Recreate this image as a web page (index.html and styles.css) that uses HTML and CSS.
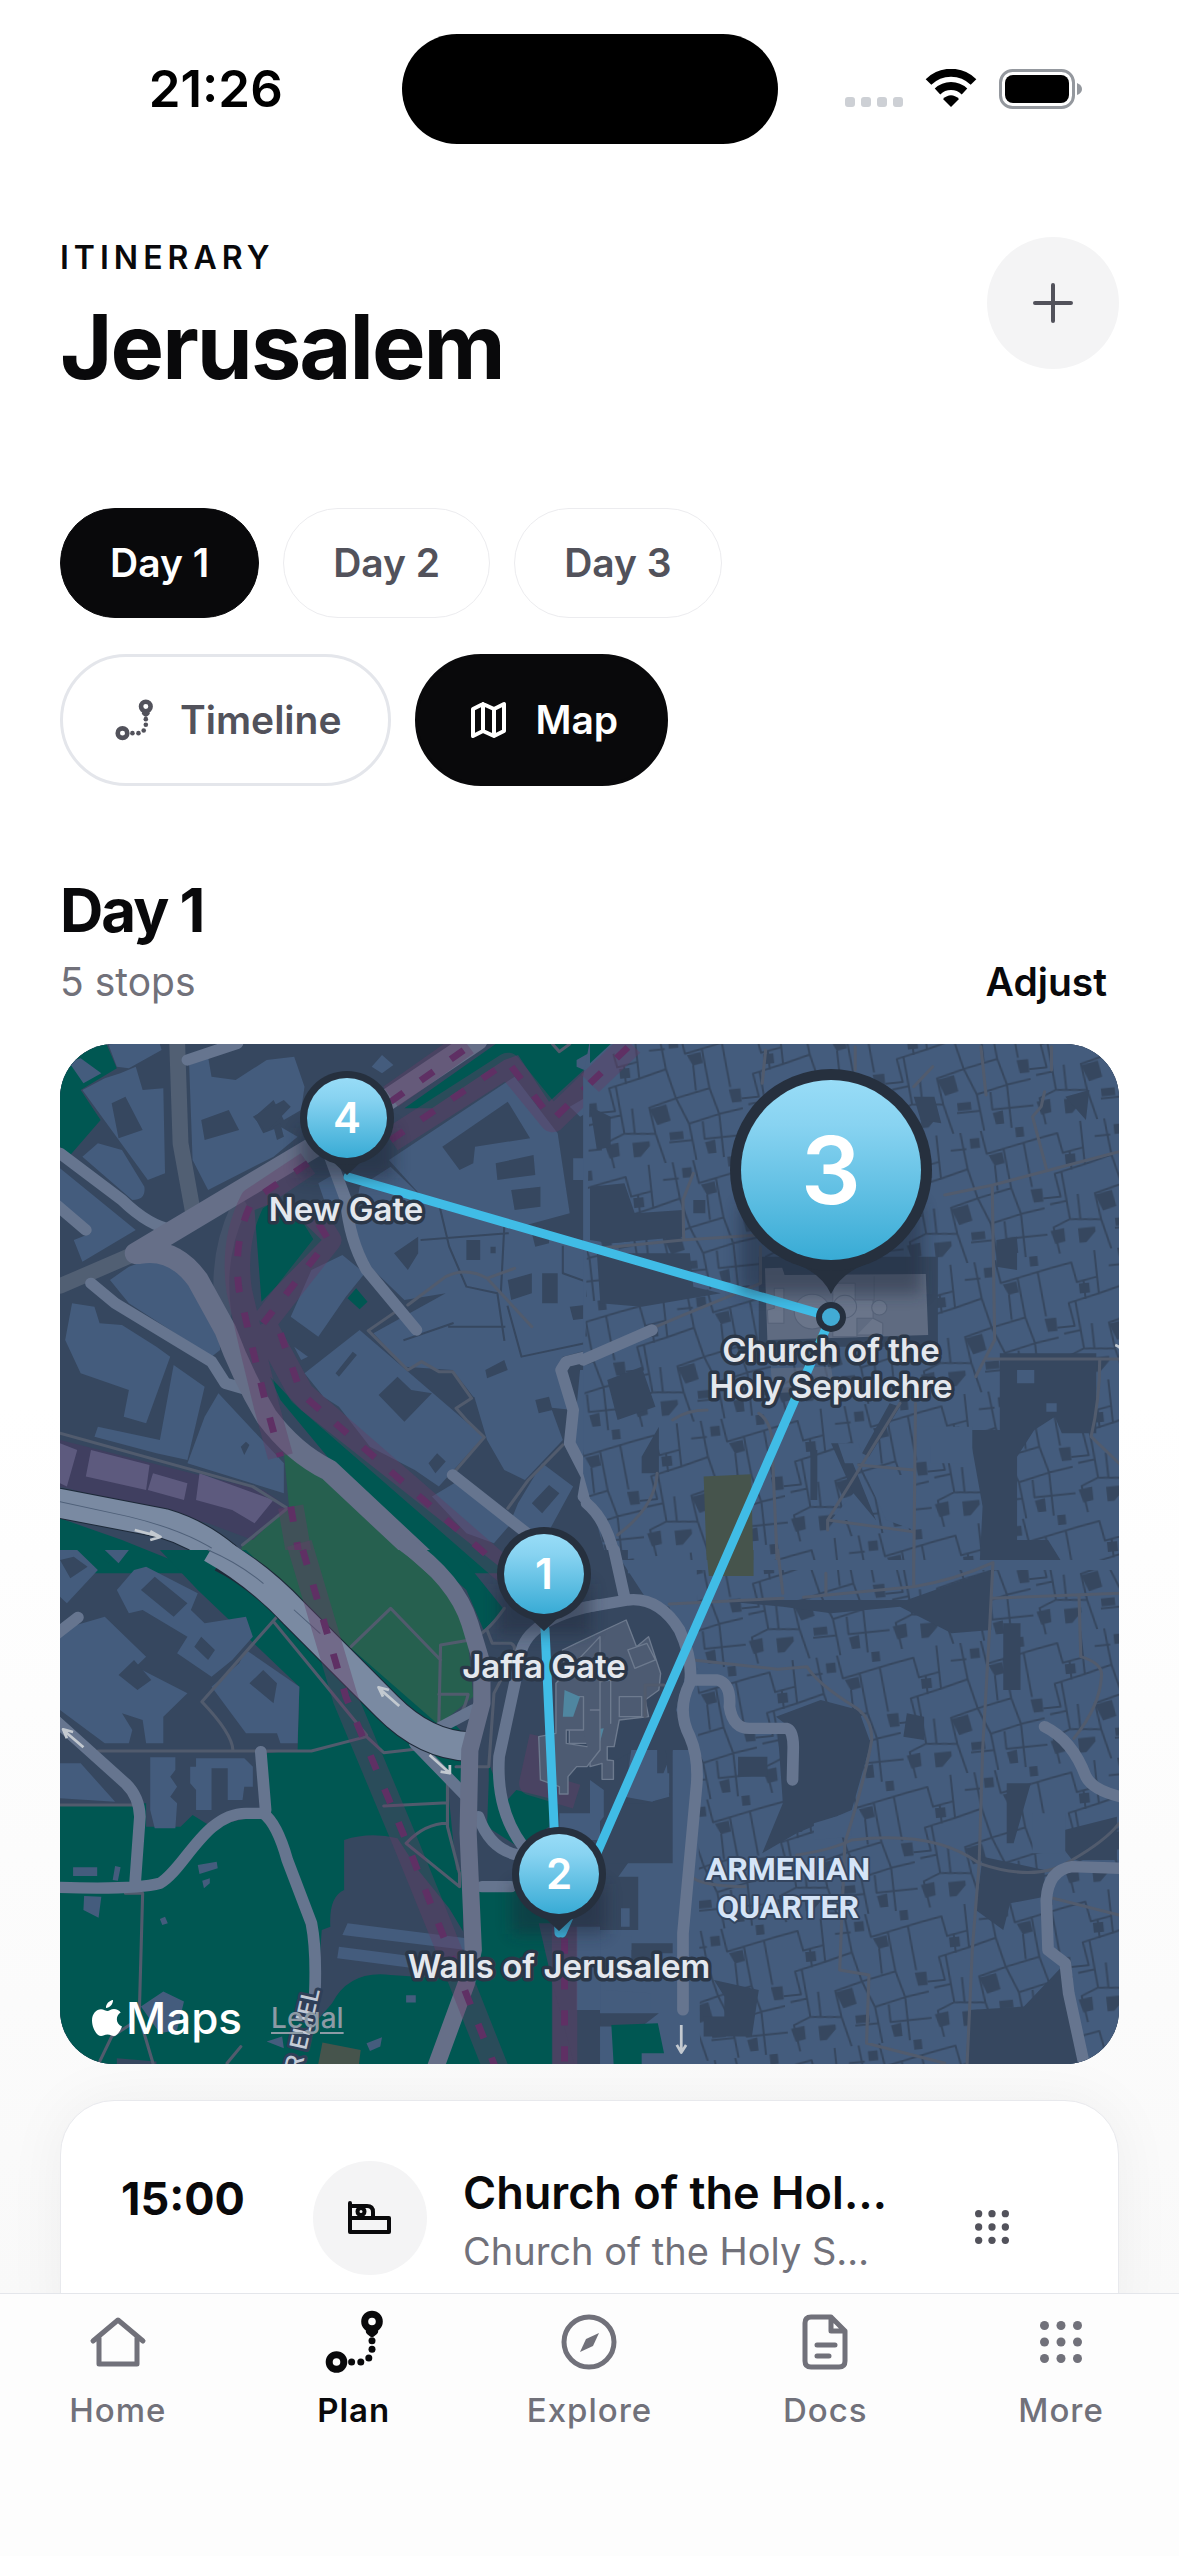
FILE: index.html
```html
<!DOCTYPE html>
<html lang="en">
<head>
<meta charset="utf-8">
<meta name="viewport" content="width=device-width, initial-scale=1">
<title>Itinerary – Jerusalem</title>
<link rel="stylesheet" href="styles.css">
</head>
<body>
<svg class="defs" aria-hidden="true">
  <symbol id="route" viewBox="0 0 64 64">
    <circle cx="14.500" cy="52" r="7.300"/>
    <circle cx="50" cy="11.500" r="7.300"/>
    <path d="M47.500 21.500L50 23.500 52.500 21.500"/>
    <g stroke="none" fill="currentColor"><circle cx="29.600" cy="52" r="3.500"/><circle cx="38.800" cy="52" r="3.500"/><circle cx="46.800" cy="48" r="3.500"/><circle cx="50" cy="39.300" r="3.500"/><circle cx="50" cy="30.700" r="3.500"/></g>
  </symbol>
  <symbol id="grid" viewBox="0 0 42 42">
    <g stroke="none" fill="currentColor"><circle cx="4.500" cy="4.500" r="4.500"/><circle cx="21" cy="4.500" r="4.500"/><circle cx="37.500" cy="4.500" r="4.500"/><circle cx="4.500" cy="21" r="4.500"/><circle cx="21" cy="21" r="4.500"/><circle cx="37.500" cy="21" r="4.500"/><circle cx="4.500" cy="37.500" r="4.500"/><circle cx="21" cy="37.500" r="4.500"/><circle cx="37.500" cy="37.500" r="4.500"/></g>
  </symbol>
</svg>

<div class="statusbar">
  <span class="clock">21:26</span>
  <span class="island"></span>
  <div class="indicators">
    <svg width="58" height="40" viewBox="0 0 58 40"><path fill="#cdd0d5" d="M3 28h4q3 0 3 3v4q0 3-3 3H3q-3 0-3-3v-4q0-3 3-3zM19 28h4q3 0 3 3v4q0 3-3 3h-4q-3 0-3-3v-4q0-3 3-3zM35 28h4q3 0 3 3v4q0 3-3 3h-4q-3 0-3-3v-4q0-3 3-3zM51 28h4q3 0 3 3v4q0 3-3 3h-4q-3 0-3-3v-4q0-3 3-3z"/></svg>
    <svg width="52" height="40" viewBox="0 0 52 40"><g stroke="#000" stroke-width="8"><path d="M3.500 13a32 32 0 0 1 45 0"/><path d="M12.500 22.500a19.500 19.500 0 0 1 27 0"/></g><path fill="#000" d="M26 38l-8-8q8-7.500 16 0z"/></svg>
    <svg width="83" height="40" viewBox="0 0 83 40"><rect x="1.500" y="1.500" width="73" height="37" rx="12" stroke="#94989e" stroke-width="3"/><rect x="6" y="6" width="64" height="28" rx="8" fill="#000"/><path d="M78 14q5 2 5 6t-5 6z" fill="#94989e"/></svg>
  </div>
</div>

<main class="page">
  <header class="top">
    <div>
      <p class="eyebrow">ITINERARY</p>
      <h1>Jerusalem</h1>
    </div>
    <button class="add" aria-label="Add"><svg width="40" height="40" viewBox="0 0 40 40"><path d="M20 2v36M2 20h36"/></svg></button>
  </header>

  <div class="pills days">
    <button class="pill active">Day 1</button>
    <button class="pill">Day 2</button>
    <button class="pill">Day 3</button>
  </div>
  <div class="pills modes">
    <button class="mode"><svg class="route" width="42" height="42"><use href="#route"/></svg>Timeline</button>
    <button class="mode active"><svg width="42" height="42" viewBox="0 0 42 42"><path d="M5 10l10-5 11 5 10-5v27l-10 5-11-5-10 5zM15 5v27M26 10v27"/></svg>Map</button>
  </div>

  <div class="dayhead">
    <div>
      <h2>Day 1</h2>
      <p class="muted">5 stops</p>
    </div>
    <button class="adjust">Adjust</button>
  </div>

  <section class="map" aria-label="Map of Day 1">
    <svg viewBox="0 0 1059 1020">
      <defs>
        <linearGradient id="ball" x1="0" y1="0" x2="0" y2="1"><stop offset="0" stop-color="#98dcf7"/><stop offset=".25" stop-color="#88d3f1"/><stop offset="1" stop-color="#38abd5"/></linearGradient>
        <filter id="soft" x="-30%" y="-30%" width="160%" height="160%"><feGaussianBlur stdDeviation="8"/></filter>
        <pattern id="lanes" width="420" height="390" patternUnits="userSpaceOnUse" patternTransform="rotate(-6)">
          <path class="lane" d="M0 40L60 30 70 90 130 80M130 0V130L40 150 50 220H0M60 150L70 290 20 310 30 390M130 130L210 110 200 0M210 110L230 200 150 220 160 300 70 290M230 200L330 180 320 60 270 70 260 0M320 60L420 40M330 180L350 260 420 250M350 260L260 280 270 390M160 300L180 390M260 280L230 200M380 50L390 180M350 330H420M350 260V390M90 90V140M100 220V290M170 50H210M290 110V180M300 280V330H350M20 240L60 235M200 330H260"/>
          <path class="ground" d="M75 95h30v30h-30zM150 225l50-10 8 50-40 10zM275 75l40-6 4 34-30 5zM385 190h34v40h-28zM200 300h40v24h-40zM10 320l40-5v40l-30 5zM360 0h24v30h-24zM300 340l30-5v40h-24zM90 320h50v14l-30 30h-20zM225 20h28v30h-28z"/>
        </pattern>
      </defs>
      <rect class="ground" width="1059" height="1020"/>

      <!-- north-west: New Gate -->
      <g transform="translate(0 -4) scale(.3444 .3333)">
        <path class="green" d="M0 12H135L165 85 60 150 118 240 30 345 0 320ZM1000 205H1080L1290 60 1330 45 1420 185 1568 45V12H1265ZM565 510L640 480 760 600 585 785ZM610 1010L700 1110 1300 1600H1080L800 1280 640 1080ZM0 1435L180 1500 420 1600H0ZM835 775L860 745 893 785 870 808Z"/>
        <path class="park" d="M650 1240L760 1300 1080 1580H510L530 1515 665 1400Z"/>
        <path class="bld" d="M140 12H290L295 30 200 85 165 80ZM25 65L60 55 120 100 68 130ZM65 150L130 115 175 100 220 80 240 150 300 145 305 400 255 420ZM110 310L180 330 245 440Q250 480 210 480L65 350ZM0 385L220 570 65 665 40 600 90 580 0 500ZM375 75L430 50 440 110 510 120 600 60 680 50 710 140 700 210 650 240 620 180 565 230 590 280 640 260 690 290 620 350 430 450 385 360ZM145 720L200 680Q300 640 340 690L460 850 465 930 440 950 200 790ZM35 790L100 800 115 850 180 855 280 920 320 950 250 1150 185 1130 200 1050 60 1000 15 900ZM330 975L420 1040 370 1260 280 1240 100 1190 110 1160 290 1200ZM460 1060L650 1270V1360L370 1270 420 1130ZM905 80L935 45 968 75 935 100ZM450 185L500 160 490 130 530 115 540 160 470 200ZM955 360L1320 110 1445 280 1480 520 1300 570 1060 480ZM750 430L800 400 830 490 780 520ZM870 440L960 380 1060 480 1300 560 1568 640V920L1460 950 1440 990 1490 1110 1300 1090 1200 1070 1140 990 1000 980 910 880 1120 760 1000 780 900 680 850 560ZM820 645L885 700 830 770 750 890 670 830 730 690ZM680 920L720 950 700 960ZM710 1000L870 870 1230 1190 1100 1340 1030 1290 900 1220 810 1100 765 1070ZM1200 1060L1400 1030 1460 1200 1350 1320 1290 1290 1240 1200ZM1080 1370L1160 1320 1310 1450 1260 1510 1180 1480ZM1330 1390L1400 1270 1490 1340 1400 1510 1310 1440ZM1510 990H1568V1400L1540 1310 1490 1210 1500 1100ZM1490 355H1550V420H1490ZM1500 60L1568 20V110L1500 80ZM1480 200L1530 170 1560 200 1510 230Z"/>
        <path class="ground" d="M410 240L490 210 520 270 420 300ZM560 230L650 180 670 200 600 275ZM620 260L640 250 650 290 630 300ZM1110 320L1300 185 1365 295 1205 320 1200 370 1160 390ZM1265 370L1375 345 1380 405 1270 420ZM1310 450L1395 440 1395 500 1320 510ZM970 640L1040 590V640L1010 690ZM1180 600h40v60h-40ZM1300 720L1370 700V760L1310 780ZM1400 700h45v90h-45ZM1235 990L1290 960 1300 990 1240 1015ZM925 1065L980 1010 1020 1050 1080 1060 1000 1145ZM1070 1270L1095 1240 1120 1265 1090 1300ZM1370 1390L1420 1335 1450 1360 1400 1420ZM150 190L190 170 240 270 170 295ZM1480 800L1568 790V830L1490 840ZM1250 620h15v20h-15ZM1370 580L1420 560V610L1380 620ZM1380 1080L1420 1070 1430 1110 1390 1120ZM800 1000L850 935 862 945 810 1010ZM525 1220L540 1205 550 1215 535 1245Z"/>
        <path class="lane" d="M1100 490L1130 620 1180 740 1270 760 1290 900M1290 560L1280 760M1460 620V700L1568 740M1050 600L1300 580M1300 800L1340 950 1568 900M1130 860H1290M1000 900L1140 850"/>
        <path class="plum" d="M0 1200L420 1310 590 1350 660 1400 560 1500 430 1450 0 1340Z"/>
        <path class="plumbld" d="M90 1230L260 1275 250 1350 75 1310ZM270 1300L370 1330 360 1380 255 1350ZM405 1300L620 1380 565 1450 500 1410 395 1380ZM0 1210L50 1230 20 1340 0 1330Z"/>
        <path class="path" d="M1010 795L1120 710Q1180 680 1240 715L1370 860M1240 715L1320 685M975 815L895 872 1010 990 1050 965 1100 995H1140L1195 1075 1150 1105 1180 1140 1232 1192 1150 1290M1460 1215L1360 1320 1300 1405M0 1180L560 1340 660 1405 530 1515M1430 12L1450 35 1480 12"/>
        <path class="road dim" d="M340 0L350 310 385 510M0 738L220 640"/>
        <path class="road dimmer" d="M520 500Q450 650 475 820"/>
        <path class="road" d="M0 340L180 480Q260 560 330 570M90 730L160 790 440 965 480 1030 530 1045M-10 495L75 570M780 340L830 480Q840 600 890 690L1035 870M370 60L515 10M1568 940L1470 965 1455 990 1490 1110 1480 1210 1530 1310 1520 1370 1580 1440M1140 1305L1380 1500"/>
        <path class="road main wide" d="M220 640L820 270 1210 0M230 640Q330 620 400 720L480 870Q530 1010 600 1130 680 1240 780 1290L1090 1590"/>
        <path class="wall" d="M720 370L560 480Q500 600 520 750L560 930 600 1100 640 1250M590 850L780 600 720 500M590 850L700 1060 1300 1600M960 300L1300 75 1430 240 1580 90M960 170L1180 10M670 1400L700 1580"/>
        <path class="walldash" d="M720 370L560 480Q500 600 520 750L560 930 600 1100 640 1250M590 850L780 600 720 500M640 880L700 1060 1300 1600M960 300L1300 65 1430 240 1580 90M960 185L1180 25M670 1400L700 1580"/>
        <path class="edge" d="M0 1390L300 1450Q400 1480 480 1550"/>
        <path class="motorway" d="M-20 1386L300 1450Q400 1480 480 1550"/>
        <path class="thin" d="M0 1385L200 1430Q400 1480 500 1568"/>
        <path class="arrow" d="M217 1470L290 1490M262 1474L292 1491 262 1500"/>
      </g>

      <!-- north-east: Christian Quarter -->
      <g transform="translate(530 -4) scale(.3444 .3333)">
        <path class="bld" d="M0 0H1568V1600H60L-20 1300V110Z"/>
        <path fill="url(#lanes)" d="M0 80L140 0H1568V1600H60L-20 1300Z"/>
        <path class="green" d="M0 12H60L0 70Z"/>
        <path class="wall" d="M0 130L120 12"/><path class="walldash" d="M0 130L120 12"/>
        <path class="ground" d="M0 440L100 430 130 520 270 510V590L60 610 0 600ZM20 640H290L300 740 380 760 150 800 30 790ZM940 170H1000L1020 250 960 240ZM1380 170L1450 150 1440 240ZM490 650H1010V920H490ZM1100 1170H1190V940H1470V1180H1370L1350 1130 1290 1170 1240 1250V1500H1330L1390 1600H1130L1140 1400ZM50 1020L150 980 190 1100 80 1140ZM700 1210H740L830 1440H800ZM870 1090L900 1100 810 1250 790 1240ZM640 1230H660V1380H640ZM150 1250L200 1160V1300H150ZM0 200L60 230 60 320 20 330ZM1180 600L1240 590 1240 690 1180 680ZM300 480H335V520H300Z"/>
        <path class="bld" d="M720 1210H780L800 1270H740ZM800 1305H940V1470L860 1440ZM700 1440L765 1360 830 1440ZM950 1160H1110V1270H990V1220H950ZM1240 990H1290V1030H1240ZM1325 1090H1355V1115H1325Z"/>
        <path class="landmark" d="M508 685L558 683 565 705 975 702 982 885 515 900Z"/>
        <path class="landmark" d="M525 985L700 980 710 1050 530 1060Z" opacity=".6"/>
        <g class="dome"><path d="M535 745H563V850H517L515 810 535 805ZM705 730H770V780H822V835H775V890H705ZM825 710V780M822 835L850 850V885H775"/><circle cx="645" cy="815" r="52"/><circle cx="740" cy="800" r="34"/><circle cx="840" cy="803" r="22"/></g>
        <path class="olive" d="M330 1310L468 1303 475 1600H340Z"/>
        <path class="path" d="M30 625L270 600 490 585M272 600L270 480 300 400M1030 465L1170 435 1536 335M1168 440L1175 900 1120 1010M1155 957H1536M770 20V90M1135 20L1150 165M1325 385L1285 230 1310 200 1320 155M1340 20V90M495 620V730L260 830 180 865M945 1090L940 1600M900 1090L690 1440 935 1475M780 1275L940 1290M490 1120Q535 1150 530 1250L545 1600M1480 960Q1480 1080 1455 1190L1536 1270M195 1300Q190 1400 80 1485M240 1140Q280 1110 340 1110M995 80L940 140M510 30L500 130M690 1440V1470"/>
        <path class="road" d="M-20 960L180 870M-10 1390Q60 1450 80 1600"/>
        <path class="arrow" d="M1525 915Q1540 920 1550 940"/>
      </g>

      <!-- south-east: Armenian Quarter -->
      <g transform="translate(530 506) scale(.3444 .3333)">
        <path class="ground" d="M0 0H110V1568H0Z"/>
        <path class="bld" d="M90 30H1568V1568H0V1100L110 940 240 600 260 300Z"/>
        <path fill="url(#lanes)" d="M310 60H1568V1568H320Z"/>
        <path class="ground" d="M120 150L230 170 290 330 250 480 290 600 240 600 240 940H0V870L80 760H160L230 740 220 600H130L60 640 0 600V180ZM350 150H920L1165 60V240L1050 250 900 170 700 190 560 170ZM540 500L670 450 780 480 815 580 760 780 600 850 500 910 560 760 545 540H590ZM430 620H515V680H430ZM1100 1380L1260 1370 1370 1250 1430 1568H1090ZM1140 920L1320 960V1040L1220 1060 1200 1140 1120 1080ZM1340 850L1530 800V930H1400ZM0 980H140V1140H0ZM120 1180H240V1210H200V1290H120ZM0 1390H200L150 1430H0ZM360 1290L490 1320 470 1460H330V1400H390V1340ZM920 490L970 500V570L910 560ZM1210 700H1280L1230 880H1210ZM1200 220H1250V420H1200Z"/>
        <path class="bld" d="M0 690L40 720V800L0 850ZM100 740L120 600H195V670H230V730L180 755ZM90 1075H115V1130H90ZM0 1160H120V1200H0ZM40 1320L175 1330V1380H0V1320ZM650 820L760 785V860L650 870ZM1285 790H1380V910H1285Z"/>
        <path class="ruin" d="M-40 280L105 210 135 290 170 260 205 370 200 420 160 450 170 500 85 510 70 590 50 590V630L68 632V688H35V640L0 650V580H-60V480L-80 300ZM110 300L165 280 190 330 130 355ZM85 440H150V500H85ZM0 400L60 390V520"/>
        <path class="pool" d="M5 540L40 535 20 610 0 640Z"/>
        <path class="olive" d="M338 0H475V78H345Z"/>
        <path class="green" d="M62 1425L197 1420 215 1510H150V1568H70Z"/>
        <path class="path" d="M230 162L560 145M620 142L940 110Q1060 90 1170 38L1160 240 1140 600 1130 940 1110 1200 1095 1540M1165 145L1536 130M1420 140L1425 320Q1490 340 1485 380 1480 470 1405 565M300 330L545 358 630 350Q660 400 760 465 820 500 818 570 800 680 740 880L725 1260 810 1275 803 1480 1030 1540M600 915Q700 900 760 870 1000 840 1130 940 1300 1000 1400 930 1500 870 1536 820M300 985Q340 1010 450 1010M1345 1045L1536 1095M940 0V105M545 0L560 130M685 70V135M160 500V405H215"/>
        <path class="road" d="M-15 172L110 150Q200 140 260 240 300 330 290 400 250 480 290 560 315 620 310 700L270 1150V1380M70 0L100 140M300 390H370Q410 400 405 470 415 540 470 535H570Q592 540 590 600L588 690M1320 530Q1400 570 1440 680 1460 720 1540 740M1540 955L1400 950Q1330 960 1325 1050L1330 1200 1380 1240 1390 1330 1440 1568"/>
        <path class="arrow" d="M265 1425V1505M252 1485L265 1508 279 1485"/>
      </g>

      <!-- south-west: Jaffa Gate and the valley -->
      <g transform="translate(0 506) scale(.3444 .3333)">
        <path class="green" d="M290 0H690L1170 550V1568H0V765H160L250 760V830H350L385 795 440 830 600 790V610L690 600 695 410 400 120ZM95 0H190L140 40ZM1050 0H1150L1290 180 1230 240 1180 120ZM1180 1000H1380L1430 1110V1568H1150ZM1245 690V640L1290 760 1325 720 1420 745V830L1330 890 1240 830Z"/>
        <path class="park" d="M540 0H990L1110 110 1180 230 1200 440 1100 525 840 290Z"/>
        <path class="ground" d="M825 870Q900 845 980 865L1040 960 1130 1075 1180 1160V1290L960 1275Q840 1260 790 1360L740 1420 760 1140 785 1130Q780 1040 825 1020ZM1125 700H1170V960H1150ZM1390 1120H1568V1568H1500L1430 1300Z"/>
        <path class="bld" d="M0 0H50L110 60 20 160 0 140ZM130 0H200L170 40ZM165 120L215 60 250 50 400 130 380 180 420 220 540 200 560 260 500 330 440 380 340 310 370 260 240 180 200 190ZM30 230L130 200 250 320 220 350 370 430 300 500V580H250L240 510 180 490 210 540 200 580H130L0 480V240ZM440 410L520 340 540 300 695 410 690 580 640 580 630 550H540L490 480ZM0 640L60 640 160 755 0 745ZM262 622H335V660L320 680 340 710 320 740 340 760 335 835H275L262 780ZM395 625H535L560 650V710H535L530 750H487V655H440V780H395V720L378 700V650H395ZM38 952H108V978H38ZM160 948L176 952 168 992 153 990ZM400 945L455 935 458 955 405 972ZM70 1038L120 1040 112 1103 68 1080ZM290 1107L305 1100 313 1120 297 1125ZM413 992L435 985V1000L418 1015ZM835 1120L1180 1165V1200L820 1155ZM810 1190L1180 1240V1275L805 1225ZM235 1370L300 1325 360 1355 340 1440 290 1450ZM1005 1336H1033V1358H1005ZM600 1475L645 1460 650 1495ZM890 1480L935 1462 930 1490 900 1503ZM1450 790H1568V870H1520L1450 850ZM1500 1130H1568V1380H1500Z"/>
        <path class="ground" d="M0 30L40 20 80 50 30 85ZM235 120L275 80 370 160 330 200ZM170 375L215 330 265 390 225 420ZM550 400L590 360 630 400 620 460ZM390 290L410 260 450 300 430 330ZM165 1525L280 1535V1568H165Z"/>
        <path class="olive" d="M762 1478L873 1500 865 1568H745Z"/>
        <path class="path" d="M110 603H730L890 560 940 608 1030 598M620 215L890 555M630 200L412 455Q500 550 502 600M845 290L960 175 1105 330M1100 520L1105 285 1190 270Q1240 250 1290 175M1100 433H1185Q1170 500 1140 510M940 768L1125 758M1125 700V830L1160 970V1010L1005 880Q1060 820 1125 820M190 1030H240L230 1400 270 1540M210 1420L150 1460 115 1535M485 1540L525 1490M1240 240L1255 280H1310Q1330 290 1310 330L1260 430 1245 650H1150M0 765H210"/>
        <path class="road" d="M1560 165Q1340 210 1335 330L1275 620Q1265 780 1345 890M1215 800Q1250 900 1330 915M1225 1010H1310M-20 505L190 700Q230 740 232 800L218 1000M-10 1012Q220 1020 290 1000C360 960 420 790 540 790H590Q630 820 660 930L730 1120Q745 1200 740 1330M583 605L597 780M1030 580L1180 740M1100 535L1200 480M-20 260L52 202"/>
        <path class="edge butt" d="M470 20Q570 70 680 190L950 470Q1060 585 1190 590"/>
        <path class="motorway butt" d="M440 -5Q570 70 680 190L950 470Q1060 585 1190 590"/>
        <path class="thin" d="M430 0Q520 40 590 100M680 180L755 250"/>
        <path class="road main" d="M1000 -20Q1150 90 1190 220L1225 340V460L1190 600 1185 850 1200 1200 1180 1300 1085 1568"/>
        <path class="wall" d="M695 -20L830 450 1000 870 1110 1150 1270 1568M1465 1130V1568M1400 560L1370 700 1500 740"/>
        <path class="walldash" d="M705 0L830 440 1000 860 1110 1150 1270 1568M1465 1165V1568"/>
        <path class="ruin" d="M1390 560L1440 550V400L1568 260V600L1530 650H1500L1475 680V732H1450V710L1395 690ZM1500 440H1520V540H1470V580L1530 590M1540 480H1568"/>
        <path class="pool" d="M1465 420L1510 440 1490 500 1460 500Z"/>
        <path class="arrow" d="M985 468L928 416M938 440L925 412 955 420M1073 615L1130 668M1132 645V670L1105 665M68 592L12 542M20 565L9 538 38 546"/>
      </g>

      <text class="street" transform="translate(260 946) rotate(-77)">DROR ELIEL</text>
      <g class="quarter"><text x="728" y="836">ARMENIAN</text><text x="728" y="874">QUARTER</text></g>

      <path class="trip" d="M288 133L771 273L502 889M485 585L499 889L503 880"/>

      <g class="pins">
        <path class="pinshade" filter="url(#soft)" d="M240 84h94v50h-94zM437 540h94v50h-94zM452 840h94v50h-94zM680 160h182v90H680z"/>
        <path class="pinedge" d="M272 117L287 131 302 117ZM469 573L484 587 499 573ZM484 873L499 887 514 873ZM725 216Q760 226 771 250 782 226 817 216Z"/>
        <circle class="pinedge" cx="287" cy="74" r="47"/><circle fill="url(#ball)" cx="287" cy="74" r="40"/>
        <circle class="pinedge" cx="484" cy="530" r="47"/><circle fill="url(#ball)" cx="484" cy="530" r="40"/>
        <circle class="pinedge" cx="499" cy="830" r="47"/><circle fill="url(#ball)" cx="499" cy="830" r="40"/>
        <circle class="pinedge" cx="771" cy="126" r="101"/><circle fill="url(#ball)" cx="771" cy="126" r="90"/>
        <circle cx="771" cy="273" r="12" fill="#42abd4" stroke="#26303e" stroke-width="6"/>
        <text x="287" y="89">4</text><text x="484" y="545">1</text><text x="499" y="845">2</text><text class="big" x="771" y="160">3</text>
      </g>
      <g class="labels">
        <text x="286" y="177">New Gate</text>
        <text x="771" y="318">Church of the</text><text x="771" y="354">Holy Sepulchre</text>
        <text x="484" y="634">Jaffa Gate</text>
        <text x="499" y="934">Walls of Jerusalem</text>
      </g>
    </svg>
    <div class="attribution">
      <span class="brand"><svg width="30" height="37" viewBox="0 0 30 37"><path d="M21 0c.3 3.500-3 8-7 8-.4-3.600 3-7.500 7-8zM22 9c2.700 0 5.200 1.400 6.700 3.600-5.800 3.600-4.800 11.400 1.300 13.900-1.500 4-4.700 9.500-8 9.500-2.500 0-3.500-1.500-6.500-1.500s-4 1.500-6.500 1.500C4.500 36 0 27.500 0 20.500 0 13.500 4.500 9.200 9 9.200c2.500 0 5 1.800 6.500 1.800S19 9 22 9z"/></svg>Maps</span>
      <a class="legal" href="#legal">Legal</a>
    </div>
  </section>

  <article class="stop">
    <time class="time">15:00</time>
    <span class="badge"><svg width="46" height="34" viewBox="0 0 46 34"><path d="M3 2v29h39V17H3M3 5h17q6 0 6 6v6"/><circle cx="14" cy="10.500" r="3.500"/></svg></span>
    <div class="stoptext">
      <h3>Church of the Holy Sepulchre</h3>
      <p class="muted">Church of the Holy Sepulchre</p>
    </div>
    <button class="grip" aria-label="Reorder"><svg width="34" height="34"><use href="#grid"/></svg></button>
  </article>
</main>

<nav class="tabs">
  <a class="tab" href="#home"><svg width="64" height="64" viewBox="0 0 64 64"><path d="M7 31L32 10l25 21M13 28v26h38V28"/></svg>Home</a>
  <a class="tab current" href="#plan"><svg class="route" width="64" height="64"><use href="#route"/></svg>Plan</a>
  <a class="tab" href="#explore"><svg width="64" height="64" viewBox="0 0 64 64"><circle cx="32" cy="32" r="25"/><path class="solid" d="M42 23l-6 13-13 6 6-13z"/></svg>Explore</a>
  <a class="tab" href="#docs"><svg width="64" height="64" viewBox="0 0 64 64"><path d="M38 7H18q-6 0-6 6v38q0 6 6 6h28q6 0 6-6V21zM38 7v14h14M24 35h18M24 46h12"/></svg>Docs</a>
  <a class="tab" href="#more"><svg width="64" height="64" viewBox="-11 -11 64 64"><use href="#grid" width="42" height="42"/></svg>More</a>
</nav>
</body>
</html>
```
FILE: styles.css
```css
* { box-sizing: border-box; }

body {
  margin: 0;
  height: 100vh;
  display: flex;
  flex-direction: column;
  overflow: hidden;
  background: linear-gradient(#fff 55%, #f9f9f9 90%);
  color: #09090b;
  font-family: Inter, "Noto Sans", sans-serif;
  font-size: 39px;
  line-height: 48px;
}

h1, h2, h3, p { margin: 0; }
button { border: 0; padding: 0; background: none; color: inherit; font: inherit; cursor: pointer; }
a { color: inherit; text-decoration: none; }
svg { flex: none; fill: none; stroke: currentColor; stroke-linecap: round; stroke-linejoin: round; }
.defs { display: none; }
.muted { color: #71717a; }

/* status bar */
.statusbar {
  flex: none;
  display: grid;
  grid-template-columns: 1fr 376px 1fr;
  align-items: center;
  padding: 34px 0 93px;
}
.clock { padding-left: 30px; text-align: center; font-size: 51px; font-weight: 600; color: #000; }
.island { height: 110px; border-radius: 55px; background: #000; }
.indicators { display: flex; justify-content: center; gap: 22px; padding-right: 29px; }
.indicators svg { stroke: none; stroke-linecap: butt; }

/* page */
.page { flex: 1; min-height: 0; padding: 0 60px; overflow: hidden; }
.top { display: flex; justify-content: space-between; align-items: flex-start; }
.eyebrow { font-size: 32px; font-weight: 600; line-height: 42px; letter-spacing: 5px; }
h1 { margin-top: 12px; font-size: 90px; line-height: 112px; font-weight: 700; letter-spacing: -2px; }
.add {
  display: grid;
  place-items: center;
  width: 132px;
  height: 132px;
  border-radius: 50%;
  background: #f4f4f5;
  color: #52525b;
}
.add svg { stroke-width: 4; }

.pills { display: flex; gap: 24px; font-weight: 600; color: #52525b; }
.days { margin-top: 105px; }
.modes { margin-top: 36px; }
.pill { height: 110px; padding: 0 49px; border: 1px solid #ececef; border-radius: 55px; }
.mode {
  display: flex;
  align-items: center;
  gap: 25px;
  height: 132px;
  padding: 0 47px 0 50px;
  border: 3px solid #e4e6eb;
  border-radius: 66px;
}
.mode svg { stroke-width: 4; }
.mode .route { stroke-width: 7; }
.mode.active, .pill.active { background: #09090b; border-color: #09090b; color: #fff; }

.dayhead { display: flex; justify-content: space-between; align-items: flex-end; margin: 88px 0 38px; }
h2 { font-size: 60px; line-height: 72px; font-weight: 700; letter-spacing: -2px; }
.dayhead .muted { margin-top: 12px; }
.adjust { padding-right: 12px; font-weight: 600; }

/* map */
.map { position: relative; border-radius: 54px; overflow: hidden; background: #36475f; }
.map > svg { display: block; width: 100%; stroke: none; }
.ground { fill: #36475f; }
.green { fill: #005752; }
.park { fill: #26604f; }
.olive { fill: #46544c; }
.bld { fill: #445c7d; }
.plum { fill: #403f60; }
.plumbld { fill: #5d5a7e; }
.landmark { fill: #5f6b81; }
.dome { fill: #6a758a; stroke: #566278; stroke-width: 3; }
.ruin { fill: #4d5b72; stroke: #6d7a8e; stroke-width: 4; }
.pool { fill: #4f86a0; }
.lane { fill: none; stroke: #36475f; stroke-width: 6; stroke-linecap: square; }
.path, .road, .wall, .walldash, .edge, .motorway, .thin, .arrow { fill: none; }
.path { stroke: #515b6d; stroke-width: 9; }
.road { stroke: #66758f; stroke-width: 34; }
.road.main { stroke: #666f88; stroke-width: 50; }
.road.wide { stroke-width: 64; }
.road.dim { stroke: #515f73; stroke-width: 46; }
.road.dimmer { stroke: #44526a; stroke-width: 46; }
.wall { stroke: #633f66; stroke-opacity: .42; stroke-width: 74; stroke-linecap: butt; }
.walldash { stroke: #5f3064; stroke-width: 20; stroke-dasharray: 46 62; stroke-linecap: butt; }
.edge { stroke: #1d2938; stroke-width: 92; }
.motorway { stroke: #7a8aa2; stroke-width: 86; }
.butt { stroke-linecap: butt; }
.thin { stroke: #4f6079; stroke-width: 3; }
.arrow { stroke: #c3c9d0; stroke-width: 8; stroke-linecap: butt; }
.trip { fill: none; stroke: #40bce6; stroke-width: 9; }
.pinedge { fill: #26303e; }
.pinshade { fill: #1c2737; opacity: .45; }
.map text { text-anchor: middle; paint-order: stroke; stroke-linejoin: round; }
.pins text { fill: #fff; font-size: 42px; font-weight: 600; }
.pins .big { font-size: 94px; }
.labels text { fill: #e4e8ee; stroke: #2b3748; stroke-width: 7; font-size: 33px; font-weight: 600; }
.quarter text { fill: #d5e4f7; stroke: #34455f; stroke-width: 4; font-family: Roboto, sans-serif; font-size: 32px; font-weight: 700; }
.map .street { fill: #c3cad6; stroke: #2f3f58; stroke-width: 6; font-size: 24px; font-weight: 500; text-anchor: end; }
.attribution {
  position: absolute;
  left: 32px;
  bottom: 22px;
  display: flex;
  align-items: center;
  gap: 29px;
}
.brand { display: flex; align-items: center; gap: 4px; color: #fff; font-size: 44px; font-weight: 500; }
.brand svg { stroke: none; fill: currentColor; }
.legal { color: #8d9aa5; font-size: 28px; font-weight: 500; text-decoration: underline; text-underline-offset: 4px; }

/* stop card */
.stop {
  display: flex;
  align-items: flex-start;
  min-height: 260px;
  margin-top: 36px;
  padding: 60px;
  border: 1px solid #e8e9ed;
  border-radius: 54px;
  background: #fff;
  box-shadow: 0 0 60px rgba(0, 0, 0, .05);
}
.time { width: 192px; padding: 10px 0 0; font-size: 45px; line-height: 56px; font-weight: 700; }
.badge { display: grid; place-items: center; flex: none; width: 114px; height: 114px; border-radius: 50%; background: #f4f4f5; }
.badge svg { stroke-width: 4; }
.stoptext { flex: 1; min-width: 0; margin: 4px 32px 0 36px; }
.stoptext h3, .stoptext p { overflow: hidden; white-space: nowrap; text-overflow: ellipsis; }
.stoptext p { margin-right: 16px; font-size: 38px; }
h3 { margin-bottom: 6px; font-size: 45px; line-height: 56px; font-weight: 600; }
.grip { flex: none; display: grid; place-items: center; width: 132px; height: 132px; color: #52525b; }

/* tab bar */
.tabs {
  flex: none;
  display: grid;
  grid-template-columns: repeat(5, 1fr);
  height: 263px;
  padding-top: 16px;
  border-top: 1px solid #e4e6eb;
  background: #fdfdfd;
}
.tab {
  display: flex;
  flex-direction: column;
  align-items: center;
  gap: 14px;
  color: #71717a;
  font-size: 33px;
  line-height: 44px;
  font-weight: 500;
  letter-spacing: 1px;
}
.tab svg { stroke-width: 5; }
.tab .route { stroke-width: 7; }
.current { color: #09090b; font-weight: 600; }
.solid { fill: currentColor; stroke: none; }
```
